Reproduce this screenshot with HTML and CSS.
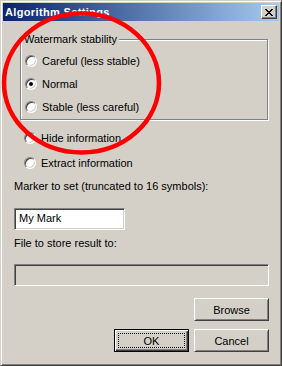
FILE: index.html
```html
<!DOCTYPE html>
<html lang="en">
<head>
    <meta charset="UTF-8">
    <title>Algorithm Settings</title>
    <link rel="stylesheet" href="styles.css">
</head>
<body>
    <div class="window">
        <div class="titlebar">
            <span class="title">Algorithm Settings</span>
            <span class="close-btn">
                <svg width="8" height="7" viewBox="0 0 8 7" shape-rendering="crispEdges">
                    <path d="M0 0h2v1h-2zM6 0h2v1h-2zM1 1h2v1h-2zM5 1h2v1h-2zM2 2h4v1h-4zM3 3h2v1h-2zM2 4h4v1h-4zM1 5h2v1h-2zM5 5h2v1h-2zM0 6h2v1h-2zM6 6h2v1h-2z" fill="#000"/>
                </svg>
            </span>
        </div>
        <div class="dialog">
            <fieldset class="group">
                <legend>Watermark stability</legend>
                <div class="radio"><span class="radio-box"></span>Careful (less stable)</div>
                <div class="radio"><span class="radio-box checked"></span>Normal</div>
                <div class="radio"><span class="radio-box"></span>Stable (less careful)</div>
            </fieldset>
            <div class="mode">
                <div class="radio"><span class="radio-box"></span>Hide information</div>
                <div class="radio"><span class="radio-box"></span>Extract information</div>
            </div>
            <div class="field-label first">Marker to set (truncated to 16 symbols):</div>
            <div class="edit short">My Mark</div>
            <div class="field-label">File to store result to:</div>
            <div class="edit disabled"></div>
            <div class="button-row">
                <span class="btn">Browse</span>
            </div>
            <div class="button-row last">
                <span class="btn default"><span class="focus">OK</span></span>
                <span class="btn">Cancel</span>
            </div>
        </div>
        <svg class="annotation" width="282" height="366" viewBox="0 0 282 366">
            <ellipse cx="80.5" cy="82" rx="77.5" ry="69.5" fill="none" stroke="#ff0000" stroke-width="4.6"/>
        </svg>
    </div>
</body>
</html>
```

FILE: styles.css
```css
body {
    margin: 0;
    padding: 0;
    background-color: #d4d0c8;
    font-family: 'Liberation Sans', Arial, sans-serif;
    font-size: 11px;
    color: #000000;
}
.window {
    position: relative;
    width: 282px;
    height: 366px;
    box-sizing: border-box;
    padding: 2px;
    background-color: #d4d0c8;
    border: 1px solid;
    border-color: #d4d0c8 #404040 #404040 #d4d0c8;
    box-shadow: inset 1px 1px #ffffff, inset -1px -1px #808080;
    overflow: hidden;
}
.titlebar {
    height: 18px;
    display: flex;
    align-items: center;
    justify-content: space-between;
    padding: 0 2px 0 2px;
    background: linear-gradient(to right, #0a246a, #a6caf0);
}
.title {
    color: #ffffff;
    font-weight: bold;
    font-size: 11px;
    letter-spacing: 0.35px;
}
.close-btn {
    width: 16px;
    height: 14px;
    box-sizing: border-box;
    display: flex;
    align-items: center;
    justify-content: center;
    background-color: #d4d0c8;
    border: 1px solid;
    border-color: #ffffff #404040 #404040 #ffffff;
    box-shadow: inset -1px -1px #808080;
}
.dialog {
    padding: 0 10px 0 11px;
}
.group {
    margin: 12px 0 0 6px;
    padding: 0 0 1px 0;
    width: 248px;
    box-sizing: border-box;
    border: 1px solid #808080;
    box-shadow: inset 1px 1px #ffffff, 1px 1px #ffffff;
}
.group legend {
    padding: 0 2px;
    margin-left: 1px;
    line-height: 13px;
    background-color: #d4d0c8;
}
.radio {
    display: flex;
    align-items: center;
    height: 23px;
    padding-left: 4px;
}
.group .radio:first-of-type {
    margin-top: 3px;
}
.mode {
    margin-top: 5px;
}
.mode .radio {
    height: 25px;
    padding-left: 10px;
}
.radio-box {
    position: relative;
    width: 12px;
    height: 12px;
    box-sizing: border-box;
    margin-right: 5px;
    border-radius: 50%;
    background-color: #ffffff;
    border: 1px solid;
    border-color: #808080 #ffffff #ffffff #808080;
    box-shadow: inset 1px 1px #404040, inset -1px -1px #d4d0c8;
}
.radio-box.checked::after {
    content: '';
    position: absolute;
    left: 3px;
    top: 3px;
    width: 4px;
    height: 4px;
    border-radius: 50%;
    background-color: #000000;
}
.field-label {
    margin-top: 7px;
    height: 13px;
    line-height: 13px;
}
.field-label.first {
    margin-top: 5px;
}
.edit {
    margin-top: 15px;
    height: 22px;
    box-sizing: border-box;
    padding: 0 4px;
    line-height: 19px;
    background-color: #ffffff;
    border: 1px solid;
    border-color: #808080 #ffffff #ffffff #808080;
    box-shadow: inset 1px 1px #404040, inset -1px -1px #d4d0c8;
}
.edit.short {
    width: 111px;
}
.edit.disabled {
    margin-top: 14px;
    background-color: #d4d0c8;
}
.button-row {
    display: flex;
    justify-content: flex-end;
    gap: 5px;
    margin-top: 12px;
}
.button-row.last {
    margin-top: 8px;
}
.btn {
    width: 75px;
    height: 23px;
    box-sizing: border-box;
    display: flex;
    align-items: center;
    justify-content: center;
    background-color: #d4d0c8;
    border: 1px solid;
    border-color: #ffffff #404040 #404040 #ffffff;
    box-shadow: inset 1px 1px #d4d0c8, inset -1px -1px #808080;
}
.btn.default {
    border: 1px solid #000000;
    box-shadow: inset 1px 1px #ffffff, inset -1px -1px #404040, inset -2px -2px #808080;
}
.focus {
    width: 67px;
    height: 15px;
    box-sizing: border-box;
    border: 1px dotted #000000;
    display: flex;
    align-items: center;
    justify-content: center;
}
.annotation {
    position: absolute;
    left: 0;
    top: 0;
    pointer-events: none;
}
```
